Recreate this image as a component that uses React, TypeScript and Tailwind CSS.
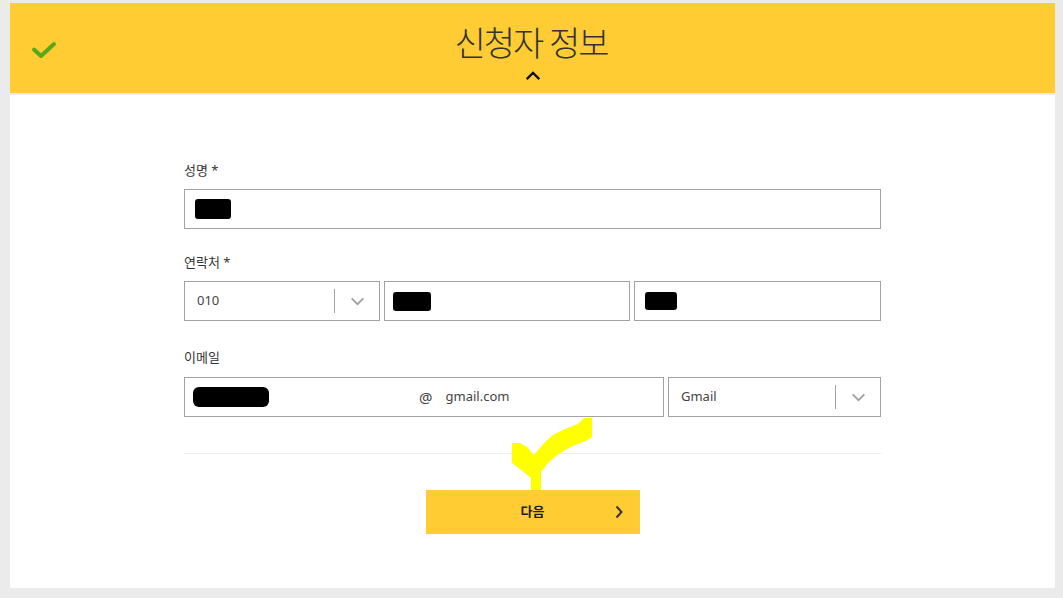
const font = "font-['Noto_Sans','Noto_Sans_CJK_KR',sans-serif]"

function Redact({ className }: { className: string }) {
  return <span className={`block rounded-[3px] bg-black ${className}`} />
}

function Chevron({ className = "" }: { className?: string }) {
  return (
    <svg viewBox="0 0 16 10" className={className} fill="none" stroke="currentColor" strokeWidth="2">
      <path d="M1.5 1.5 8 8l6.5-6.5" />
    </svg>
  )
}

function SelectBox({ value, className = "" }: { value: string; className?: string }) {
  return (
    <div className={`flex h-[40px] items-center border border-[#a3a3a3] bg-white ${className}`}>
      <span className="flex-1 pl-[12px] text-[13px] text-[#444]">{value}</span>
      <span className="h-[24px] w-px bg-[#a3a3a3]" />
      <span className="flex w-[44px] justify-center text-[#a0a0a0]">
        <Chevron className="h-[9px] w-[15px]" />
      </span>
    </div>
  )
}

function Label({ children }: { children: React.ReactNode }) {
  return <p className="mb-[9px] h-[20px] text-[13px] leading-[20px] text-[#333]">{children}</p>
}

export default function App() {
  return (
    <div className={`relative min-h-[598px] bg-[#ebebeb] pt-[3px] pb-[10px] pl-[10px] pr-[8px] ${font}`}>
      <header className="relative flex h-[90px] flex-col items-center bg-[#ffcc33]">
        <svg viewBox="0 0 26 18" className="absolute left-[21px] top-[38px] h-[18px] w-[26px]" fill="none" stroke="#58a81c" strokeWidth="4" strokeLinecap="round" strokeLinejoin="round">
          <path d="M3 8.5 10 15 23 3" />
        </svg>
        <h1 className="mt-[18px] pr-[3px] text-[34px] font-light leading-[44px] tracking-[-2px] text-[#333]">신청자 정보</h1>
        <svg viewBox="0 0 18 10" className="mt-[6px] h-[9px] w-[18px]" fill="none" stroke="#111" strokeWidth="2.6">
          <path d="M2 9 9 2l7 7" />
        </svg>
      </header>

      <main className="mt-[2px] h-[493px] bg-white pt-[65px]">
        <div className="mx-auto w-[697px]">
          <Label>성명 *</Label>
          <div className="flex h-[40px] items-center border border-[#a3a3a3] pl-[10px]">
            <Redact className="h-[20px] w-[36px]" />
          </div>

          <div className="mt-[23px]">
            <Label>연락처 *</Label>
            <div className="flex gap-[4px]">
              <SelectBox value="010" className="w-[196px]" />
              <div className="flex h-[40px] w-[246px] items-center border border-[#a3a3a3] pl-[8px]">
                <Redact className="h-[19px] w-[38px]" />
              </div>
              <div className="flex h-[40px] flex-1 items-center border border-[#a3a3a3] pl-[10px]">
                <Redact className="h-[18px] w-[32px]" />
              </div>
            </div>
          </div>

          <div className="mt-[26px]">
            <p className="mb-[10px] h-[20px] text-[13px] leading-[20px] text-[#333]">이메일</p>
            <div className="flex gap-[4px]">
              <div className="flex h-[40px] w-[480px] items-center border border-[#a3a3a3] pl-[8px] text-[13px] text-[#444]">
                <Redact className="h-[20px] w-[76px] rounded-[6px]" />
                <span className="ml-[150px] text-[15px]">@</span>
                <span className="ml-[13px]">gmail.com</span>
              </div>
              <SelectBox value="Gmail" className="flex-1" />
            </div>
          </div>

          <div className="mt-[36px] h-px bg-[#eeeeee]" />

          <div className="mt-[36px] flex justify-center">
            <button className="relative flex h-[44px] w-[214px] items-center justify-center bg-[#ffcc33] text-[13px] font-bold text-[#222]">
              다음
              <svg viewBox="0 0 8 14" className="absolute right-[17px] top-[15px] h-[14px] w-[8px]" fill="none" stroke="#333" strokeWidth="2">
                <path d="M1.5 1.5 6.5 7l-5 5.5" />
              </svg>
            </button>
          </div>
        </div>
      </main>

      <svg className="pointer-events-none absolute left-0 top-0 h-[598px] w-[1063px]" viewBox="0 0 1063 598">
        <polygon
          fill="#ffff00"
          points="512,443 520,443 527,447 534,455 545,442 553,435 565,429 578,424 584,418 592,418 592,437 586,441 575,445 565,450 556,456 548,463 541,472 541,490 531,490 531,478 520,469 512,463"
        />
      </svg>
    </div>
  )
}
